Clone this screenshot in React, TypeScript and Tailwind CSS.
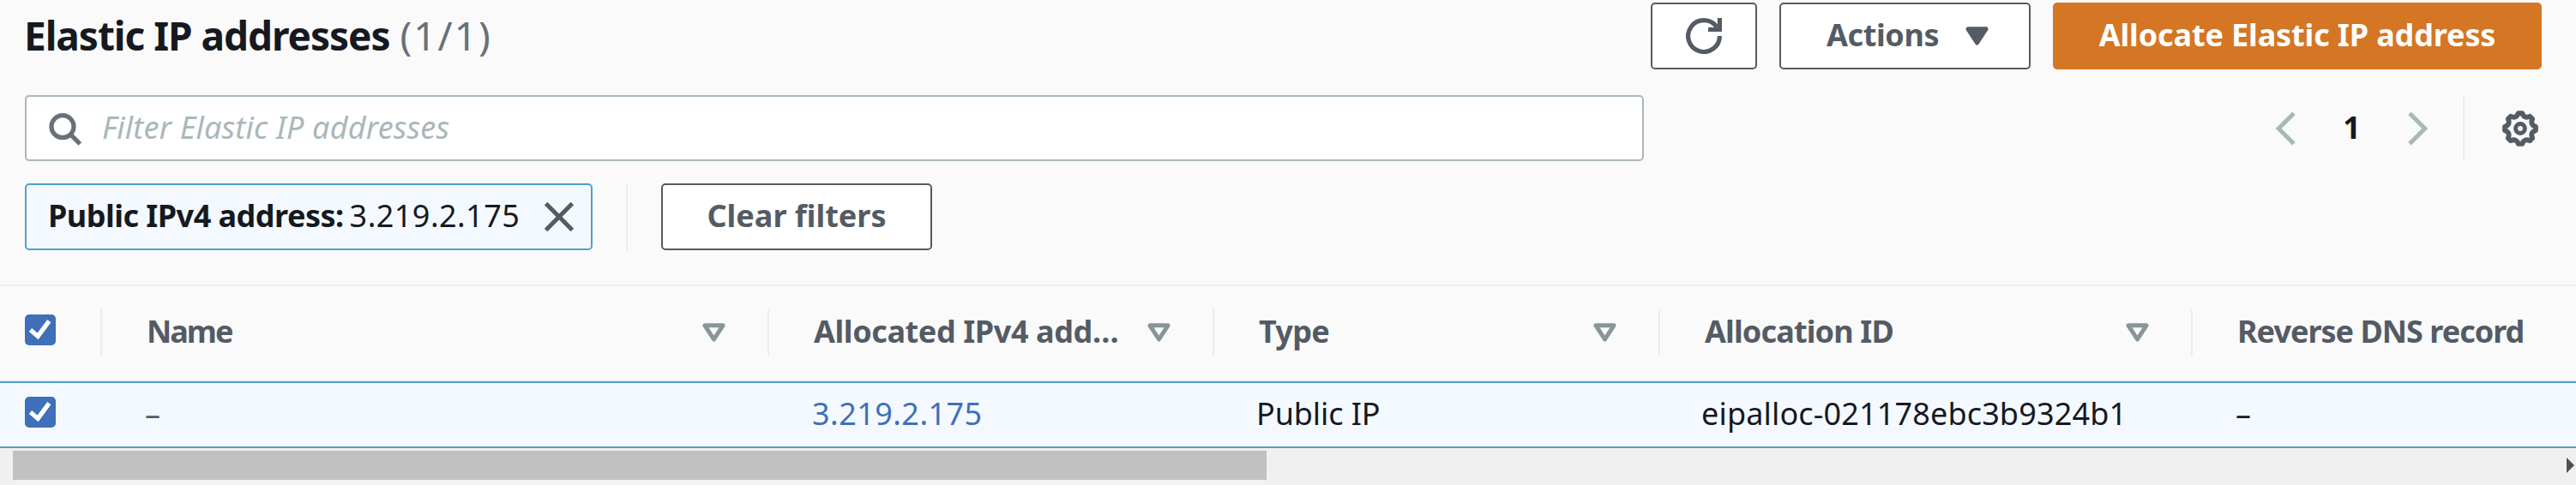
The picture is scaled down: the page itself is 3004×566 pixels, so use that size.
import { type ReactNode } from "react";

const polar = (r: number, deg: number) => {
  const a = (deg * Math.PI) / 180;
  return `${(21 + r * Math.sin(a)).toFixed(2)} ${(21 - r * Math.cos(a)).toFixed(2)}`;
};

const gearPath =
  [0, 45, 90, 135, 180, 225, 270, 315]
    .map((t, i) => `${i === 0 ? "M" : "L"}${polar(18.1, t - 7)}L${polar(18.1, t + 7)}Q${polar(12, t + 22.5)} ${polar(18.1, t + 38)}`)
    .join("") + "Z";

function RefreshIcon() {
  return (
    <svg viewBox="0 0 42 42" className="size-[42px]" fill="none" stroke="#545b64" strokeWidth="5.2">
      <path d="M39.4 21A18.4 18.4 0 1 1 36.2 10.7" />
      <path d="M39.4 0V13.5H26" />
    </svg>
  );
}

function SearchIcon() {
  return (
    <svg viewBox="0 0 42 42" className="size-[42px]" fill="none" stroke="#687078" strokeWidth="5.2">
      <circle cx="18" cy="18.7" r="13" />
      <path d="M27 27.7L38.3 39" />
    </svg>
  );
}

function GearIcon() {
  return (
    <svg viewBox="0 0 42 42" className="size-[42px]" fill="none" stroke="#545b64">
      <path d={gearPath} strokeWidth="5.8" strokeLinejoin="round" />
      <circle cx="21" cy="21" r="5.4" strokeWidth="5" />
    </svg>
  );
}

function Chevron({ right = false }: { right?: boolean }) {
  return (
    <svg viewBox="0 0 24 40" className="h-[40px] w-[24px]" fill="none" stroke="#aab7b8" strokeWidth="5">
      <path d={right ? "M2 2.3L19.8 20L2 37.7" : "M22 2.3L4.2 20L22 37.7"} />
    </svg>
  );
}

function Triangle({ filled = false }: { filled?: boolean }) {
  return (
    <svg
      viewBox="0 0 27 22"
      className="h-[22px] w-[27px] shrink-0"
      fill={filled ? "#545b64" : "none"}
      stroke={filled ? "#545b64" : "#879596"}
      strokeWidth="5"
      strokeLinejoin="round"
    >
      <path d="M3 2.8H24L13.5 19Z" />
    </svg>
  );
}

function CloseIcon() {
  return (
    <svg viewBox="0 0 36 36" className="size-[36px]" fill="none" stroke="#545b64" strokeWidth="5">
      <path d="M2.6 2.6L33.4 33.4M33.4 2.6L2.6 33.4" />
    </svg>
  );
}

function Checkbox() {
  return (
    <div className="size-[36px] rounded-[5px] bg-[#3f70b8]">
      <svg viewBox="0 0 36 36" className="size-[36px]" fill="none" stroke="#fff" strokeWidth="5.2">
        <path d="M6.5 18L15.2 25.4L28.3 7.6" />
      </svg>
    </div>
  );
}

function HeaderCell({ className, sortable = true, children }: { className: string; sortable?: boolean; children: ReactNode }) {
  return (
    <div className={`flex h-[54px] shrink-0 items-center justify-between border-[#eaeded] pl-[52px] ${className}`}>
      <span className="pb-[2px]">{children}</span>
      {sortable && <Triangle />}
    </div>
  );
}

export default function App() {
  return (
    <div className="flex h-[566px] w-[3004px] flex-col overflow-hidden bg-[#fafafa] font-['Noto_Sans',sans-serif] text-[36px] leading-[48px] whitespace-nowrap text-[#16191f]">
      <header className="flex h-[81px] shrink-0 items-end justify-between pr-[40px] pl-[28px]">
        <h1 className="mb-[16px] flex text-[46px] leading-[48px]">
          <span className="font-bold tracking-[-1.05px]">Elastic IP addresses</span>
          <span className="ml-[12px] tracking-[2px] text-[#687078]">(1/1)</span>
        </h1>
        <div className="flex h-[78px] gap-[26px] font-bold text-[#545b64]">
          <button className="flex w-[124px] items-center justify-center rounded-[5px] border-2 border-[#545b64] bg-white">
            <RefreshIcon />
          </button>
          <button className="flex w-[293px] items-center justify-between rounded-[5px] border-2 border-[#545b64] bg-white pr-[47px] pl-[53px]">
            <span className="pb-[2px] tracking-[-0.4px]">Actions</span>
            <Triangle filled />
          </button>
          <button className="flex w-[570px] items-center justify-center rounded-[5px] bg-[#d47624] text-white">
            <span className="pb-[2px] tracking-[-0.13px]">Allocate Elastic IP address</span>
          </button>
        </div>
      </header>

      <div className="mt-[30px] flex h-[77px] shrink-0 items-stretch pr-[44px] pl-[29px]">
        <div className="flex w-[1888px] items-center rounded-[5px] border-2 border-[#aab7b8] bg-white pl-[24px]">
          <SearchIcon />
          <span className="ml-[22px] pb-[1px] tracking-[0.2px] text-[#aab7b8] italic">Filter Elastic IP addresses</span>
        </div>
        <div className="ml-auto flex items-center">
          <Chevron />
          <span className="w-[131px] pb-[1px] text-center font-bold">1</span>
          <Chevron right />
        </div>
        <div className="ml-[40px] w-[2px] bg-[#eaeded]" />
        <div className="ml-[44px] flex items-center">
          <GearIcon />
        </div>
      </div>

      <div className="mt-[26px] flex h-[78px] shrink-0 items-stretch pl-[29px]">
        <div className="flex w-[662px] items-center rounded-[5px] border-2 border-[#539fc9] bg-[#f4f9ff] pl-[25px]">
          <span className="pb-[2px] font-bold tracking-[-0.52px]">Public IPv4 address:</span>
          <span className="ml-[7px] pb-[2px] tracking-[0.45px]">3.219.2.175</span>
          <div className="mr-[19px] ml-auto">
            <CloseIcon />
          </div>
        </div>
        <div className="ml-[39px] w-[2px] bg-[#eaeded]" />
        <button className="ml-[39px] flex w-[316px] items-center justify-center rounded-[5px] border-2 border-[#545b64] bg-white font-bold text-[#545b64]">
          <span className="pb-[2px]">Clear filters</span>
        </button>
      </div>

      <div className="mt-[40px] flex h-[113px] shrink-0 items-start border-y-2 border-[#eaeded] pt-[27px] font-bold text-[#545b64]">
        <div className="flex h-[54px] w-[119px] shrink-0 border-r-2 border-[#eaeded] pt-[6px] pl-[29px]">
          <Checkbox />
        </div>
        <HeaderCell className="w-[778px] border-r-2 pr-[49px] tracking-[-2px]">Name</HeaderCell>
        <HeaderCell className="w-[519px] border-r-2 pr-[49px] tracking-[-0.4px]">Allocated IPv4 add…</HeaderCell>
        <HeaderCell className="w-[520px] border-r-2 pr-[49px] tracking-[-0.7px]">Type</HeaderCell>
        <HeaderCell className="w-[621px] border-r-2 pr-[49px] tracking-[-0.85px]">Allocation ID</HeaderCell>
        <HeaderCell className="w-[447px] tracking-[-1px]" sortable={false}>Reverse DNS record</HeaderCell>
      </div>

      <div className="flex h-[78px] shrink-0 items-center border-y-2 border-[#539fc9] bg-[#f4f9ff]">
        <div className="w-[119px] shrink-0 pb-[6px] pl-[29px]">
          <Checkbox />
        </div>
        <span className="w-[778px] shrink-0 pb-[2px] pl-[50px] text-[#545b64]">–</span>
        <span className="w-[519px] shrink-0 pb-[2px] pl-[50px] tracking-[0.45px] text-[#3f70b8]">3.219.2.175</span>
        <span className="w-[520px] shrink-0 pb-[2px] pl-[49px] tracking-[-0.1px]">Public IP</span>
        <span className="w-[621px] shrink-0 pb-[2px] pl-[48px] tracking-[0.15px]">eipalloc-021178ebc3b9324b1</span>
        <span className="w-[447px] shrink-0 pb-[2px] pl-[50px]">–</span>
      </div>

      <div className="flex h-[39px] shrink-0 items-center justify-between bg-[#f0f0f0] pr-[2px] pl-[15px]">
        <div className="h-[34px] w-[1462px] bg-[#c1c1c1]" />
        <svg viewBox="0 0 9 18" className="h-[18px] w-[9px]" fill="#505050">
          <path d="M0 0L9 9L0 18Z" />
        </svg>
      </div>
      <div className="h-[4px] shrink-0 bg-[#f2f3f3]" />
    </div>
  );
}
